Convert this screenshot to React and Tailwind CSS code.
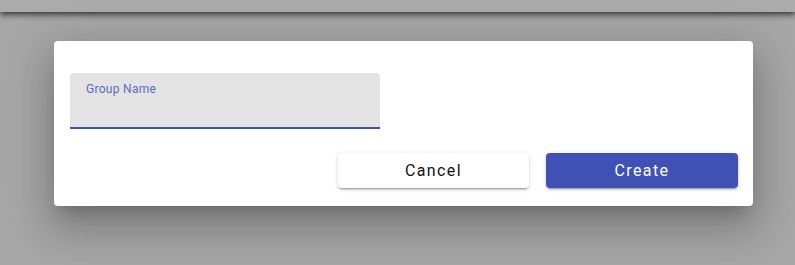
export default function App() {
  return (
    <div className="relative w-[795px] h-[265px] overflow-hidden bg-[#a6a6a6]" style={{ fontFamily: 'Roboto, "Liberation Sans", sans-serif' }}>
      <div className="h-[12px] bg-[#ababab] shadow-[0_2px_4px_-1px_rgba(0,0,0,0.4),0_4px_5px_0_rgba(0,0,0,0.28),0_1px_10px_0_rgba(0,0,0,0.24)] relative z-0" />
      <div className="pt-[29px] pl-[54px]">
        <div className="relative z-10 w-[699px] h-[165px] bg-white rounded-[4px] shadow-[0_11px_15px_-7px_rgba(0,0,0,0.2),0_24px_38px_3px_rgba(0,0,0,0.14),0_9px_46px_8px_rgba(0,0,0,0.12)] pt-[32px] pl-[16px] pr-[15px]">
          <div className="w-[310px] h-[56px] bg-[#e3e3e3] rounded-t-[4px] border-b-2 border-[#3f51b5] pl-[16px] pt-[8px]">
            <div className="text-[12px] leading-[16px] text-[#5c6bc0] tracking-[0.3px]">Group Name</div>
          </div>
          <div className="flex justify-end gap-[17px] mt-[24px]">
            <button className="w-[191px] h-[35px] bg-white rounded-[4px] text-[16px] tracking-[1.4px] text-[#111] shadow-[0_3px_1px_-2px_rgba(0,0,0,0.2),0_2px_2px_0_rgba(0,0,0,0.14),0_1px_5px_0_rgba(0,0,0,0.12)]">Cancel</button>
            <button className="w-[192px] h-[35px] bg-[#3f51b5] rounded-[4px] text-[16px] tracking-[1.4px] text-white shadow-[0_3px_1px_-2px_rgba(0,0,0,0.2),0_2px_2px_0_rgba(0,0,0,0.14),0_1px_5px_0_rgba(0,0,0,0.12)]">Create</button>
          </div>
        </div>
      </div>
    </div>
  );
}
